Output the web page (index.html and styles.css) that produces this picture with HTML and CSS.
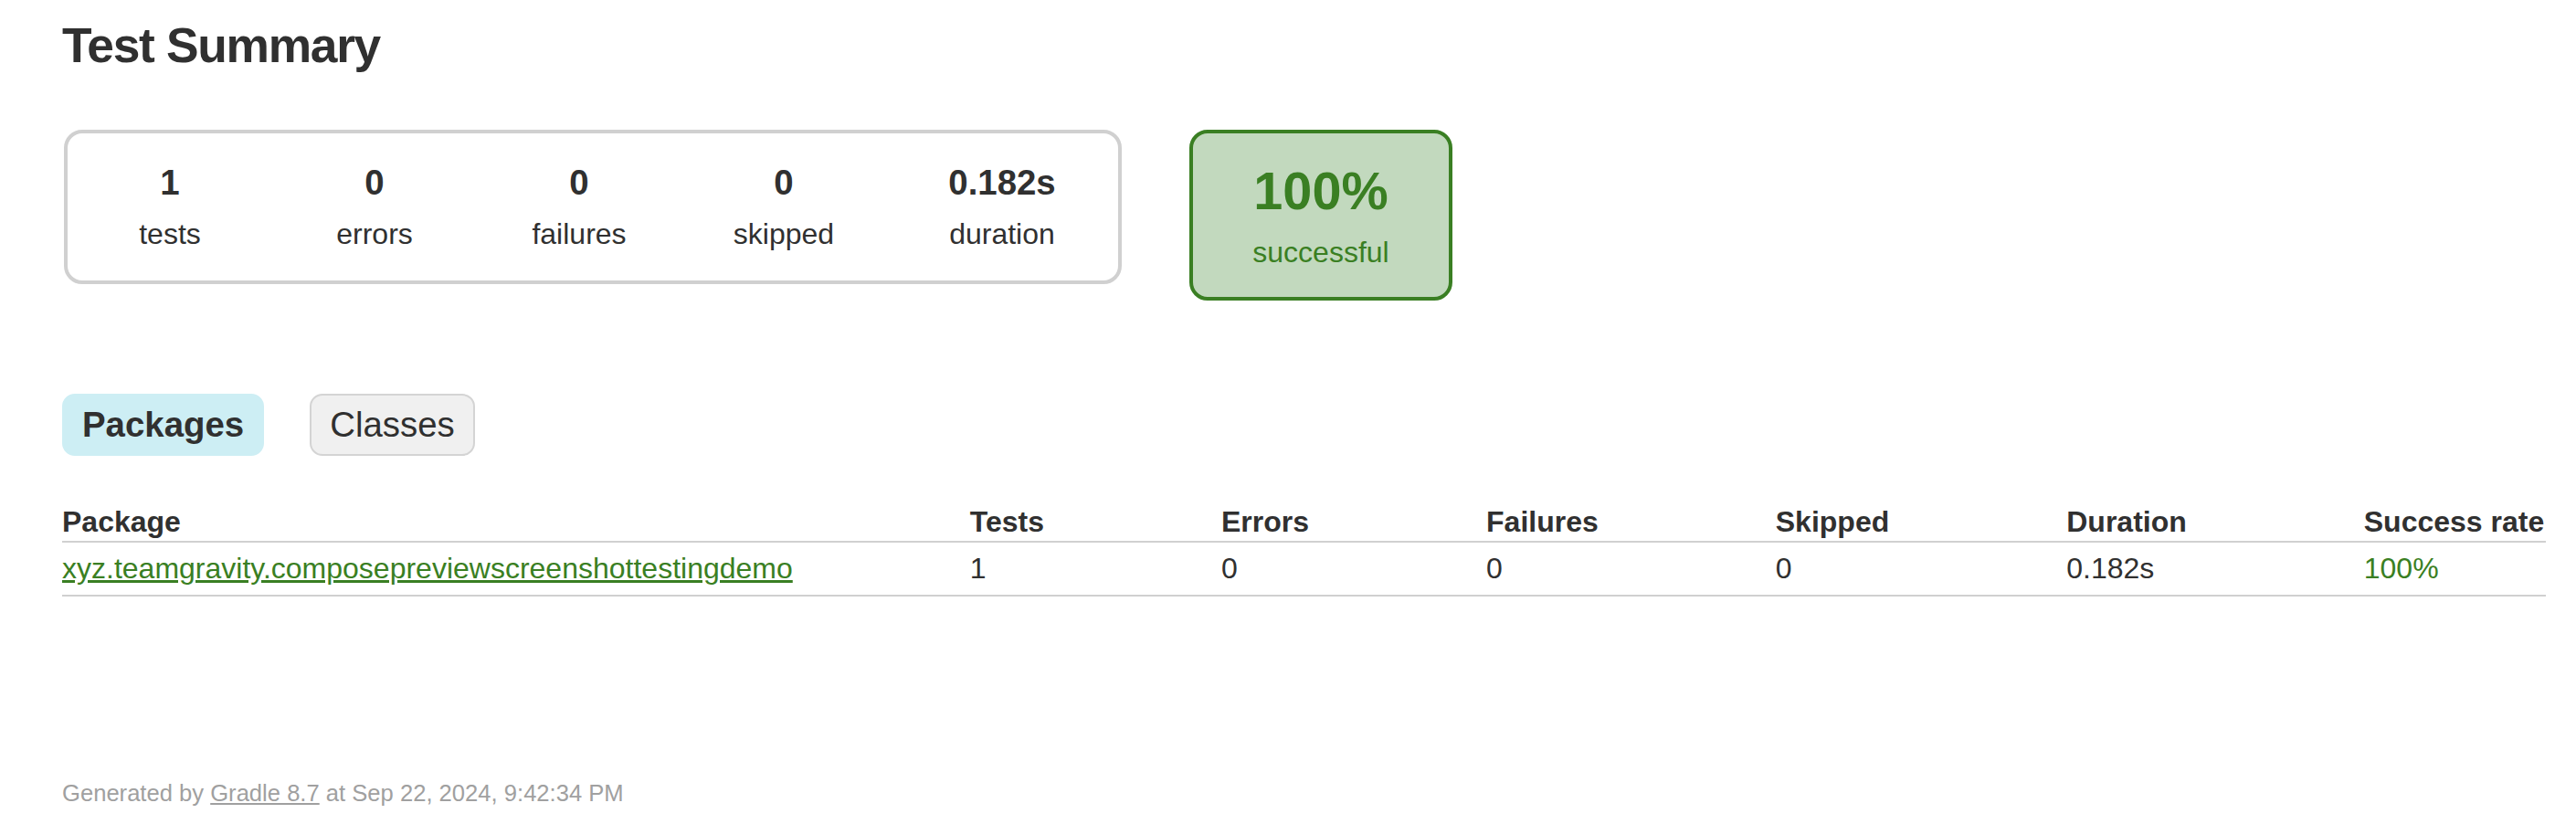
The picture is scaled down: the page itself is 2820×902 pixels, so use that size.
FILE: index.html
```html
<!DOCTYPE html>
<html>
<head>
<meta charset="utf-8">
<title>Test results - Test Summary</title>
<link rel="stylesheet" href="styles.css">
</head>
<body>
<div id="content">
  <h1>Test Summary</h1>
  <div id="summary">
    <table class="outer">
      <tr>
        <td>
          <div class="summaryGroup">
            <table>
              <tr>
                <td><div class="infoBox" id="tests"><div class="counter">1</div><p>tests</p></div></td>
                <td><div class="infoBox" id="errors"><div class="counter">0</div><p>errors</p></div></td>
                <td><div class="infoBox" id="failures"><div class="counter">0</div><p>failures</p></div></td>
                <td><div class="infoBox" id="ignored"><div class="counter">0</div><p>skipped</p></div></td>
                <td><div class="infoBox" id="duration"><div class="counter">0.182s</div><p>duration</p></div></td>
              </tr>
            </table>
          </div>
        </td>
        <td>
          <div class="infoBox success" id="successRate"><div class="percent">100%</div><p>successful</p></div>
        </td>
      </tr>
    </table>
  </div>
  <div id="tabs">
    <ul class="tabLinks">
      <li class="selected"><a href="#tab0">Packages</a></li>
      <li><a href="#tab1">Classes</a></li>
    </ul>
    <div class="tab">
      <table>
        <thead>
          <tr>
            <th>Package</th>
            <th>Tests</th>
            <th>Errors</th>
            <th>Failures</th>
            <th>Skipped</th>
            <th>Duration</th>
            <th>Success rate</th>
          </tr>
        </thead>
        <tbody>
          <tr>
            <td class="success"><a href="#">xyz.teamgravity.composepreviewscreenshottestingdemo</a></td>
            <td>1</td>
            <td>0</td>
            <td>0</td>
            <td>0</td>
            <td>0.182s</td>
            <td class="success">100%</td>
          </tr>
        </tbody>
      </table>
    </div>
  </div>
  <div id="footer">
    <p>Generated by <a href="#">Gradle 8.7</a> at Sep 22, 2024, 9:42:34 PM</p>
  </div>
</div>
</body>
</html>
```

FILE: styles.css
```css
html, body {
  margin: 0;
  padding: 0;
  background: #ffffff;
}

body {
  font-family: "Liberation Sans", Arial, Helvetica, sans-serif;
  font-size: 32px;
  color: #303030;
}

a, a:visited {
  color: #303030;
}

#content {
  padding: 19px 34px 30px 68px;
}

h1 {
  font-size: 53.33px;
  font-weight: bold;
  letter-spacing: -1.3px;
  margin: 0;
  white-space: nowrap;
}

#summary {
  margin-top: 60px;
  margin-bottom: 80px;
}

#summary table {
  border-collapse: collapse;
}

#summary td {
  vertical-align: top;
  padding: 2px;
}

.summaryGroup {
  border: solid 4px #d0d0d0;
  border-radius: 20px;
}

.infoBox {
  width: 220px;
  padding-top: 30px;
  padding-bottom: 30px;
  text-align: center;
}

.infoBox p {
  margin: 0;
}

.counter, .percent {
  font-size: 38.4px;
  font-weight: bold;
  margin-bottom: 16px;
}

#duration {
  width: 250px;
}

#successRate {
  width: 280px;
  margin-left: 70px;
  border: solid 4px #3a7f23;
  border-radius: 20px;
  background-color: #c2d9be;
}

#successRate .percent {
  font-size: 57.6px;
}

.success, .success a, .success a:visited {
  color: #3a7f23;
}

.tabLinks {
  display: flex;
  list-style: none;
  margin: 32px 0;
  padding: 20px 0;
}

.tabLinks li {
  padding: 10px 20px;
  margin-right: 50px;
  border: solid 2px #d4d4d4;
  border-radius: 14px;
  background-color: #f0f0f0;
}

.tabLinks li.selected {
  background-color: #cdeef4;
  border-color: #cdeef4;
  font-weight: bold;
}

.tabLinks a {
  font-size: 38.4px;
  display: block;
  text-decoration: none;
  color: #303030;
}

.tab table {
  border-collapse: collapse;
  border-bottom: solid #d0d0d0 2px;
}

.tab th {
  border-bottom: solid #d0d0d0 2px;
  text-align: left;
  white-space: nowrap;
  padding: 2px 2px 2px 192px;
}

.tab td {
  white-space: nowrap;
  padding: 10px 2px 10px 192px;
}

.tab th:first-child,
.tab td:first-child {
  padding-left: 0;
}

#footer {
  margin-top: 201px;
  font-size: 25.6px;
  white-space: nowrap;
  color: #a0a0a0;
}

#footer p {
  margin: 0;
}

#footer a, #footer a:visited {
  color: #a0a0a0;
}
```
